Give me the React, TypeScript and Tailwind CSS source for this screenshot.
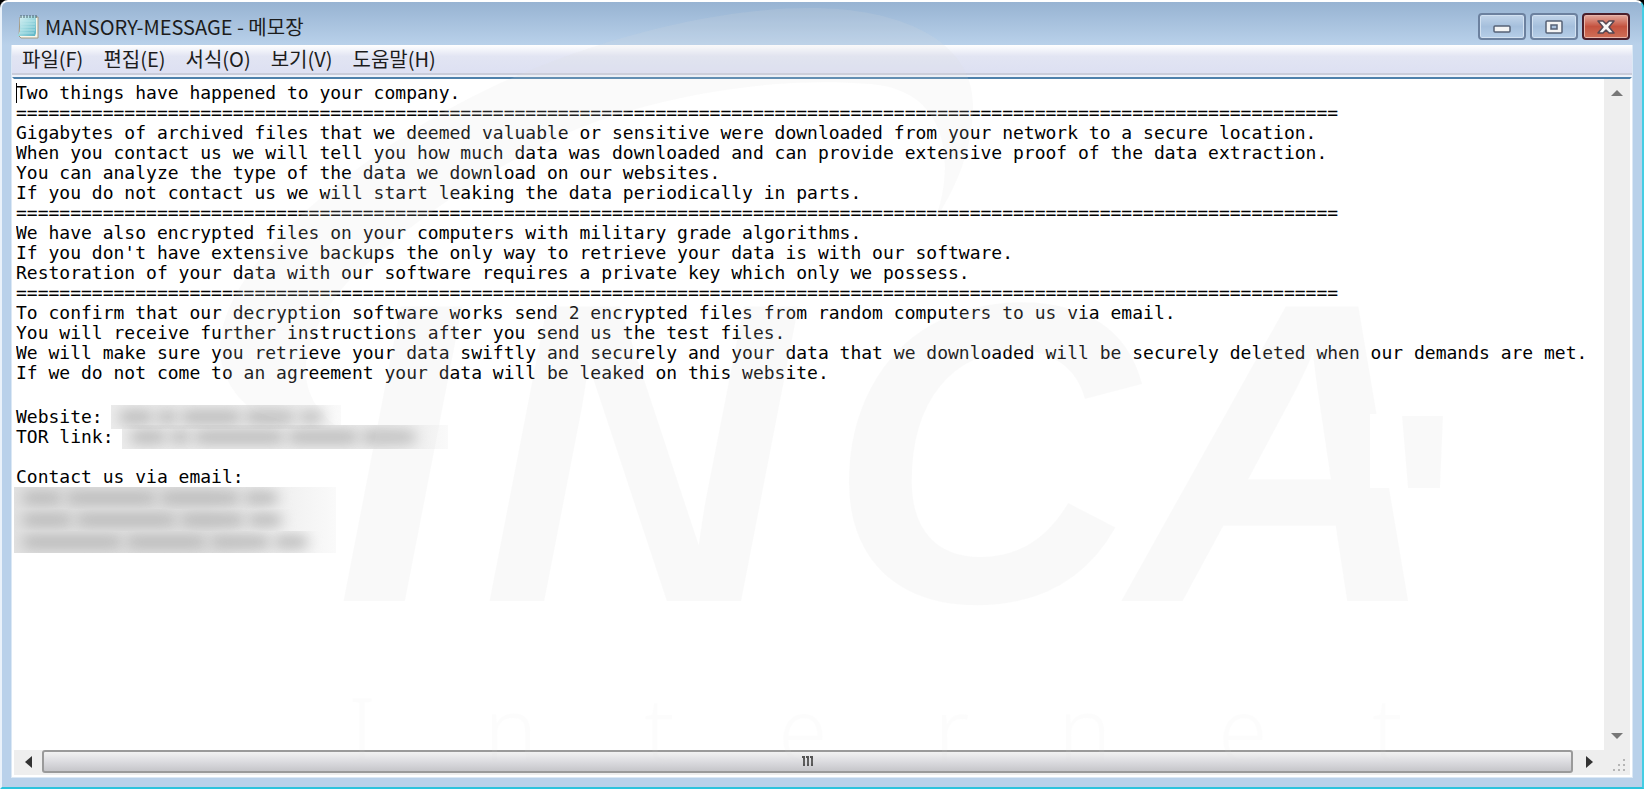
import type { ReactNode } from "react";

const RULE = "=".repeat(122);

const MESSAGE = [
  "Two things have happened to your company.",
  RULE,
  "Gigabytes of archived files that we deemed valuable or sensitive were downloaded from your network to a secure location.",
  "When you contact us we will tell you how much data was downloaded and can provide extensive proof of the data extraction.",
  "You can analyze the type of the data we download on our websites.",
  "If you do not contact us we will start leaking the data periodically in parts.",
  RULE,
  "We have also encrypted files on your computers with military grade algorithms.",
  "If you don't have extensive backups the only way to retrieve your data is with our software.",
  "Restoration of your data with our software requires a private key which only we possess.",
  RULE,
  "To confirm that our decryption software works send 2 encrypted files from random computers to us via email.",
  "You will receive further instructions after you send us the test files.",
  "We will make sure you retrieve your data swiftly and securely and your data that we downloaded will be securely deleted when our demands are met.",
  "If we do not come to an agreement your data will be leaked on this website.",
].join("\n");

const MENUS = ["파일(F)", "편집(E)", "서식(O)", "보기(V)", "도움말(H)"];

function NotepadIcon() {
  return (
    <svg width="24" height="26" viewBox="0 0 24 26" aria-hidden="true">
      <defs>
        <linearGradient id="page" x1="0" y1="0" x2="1" y2="1">
          <stop offset="0" stopColor="#e2f5f6" />
          <stop offset="0.5" stopColor="#9fd9e0" />
          <stop offset="1" stopColor="#58b2c4" />
        </linearGradient>
      </defs>
      <path d="M4 3 H22 V24 H5 L3 22 Z" fill="#fbf7ea" stroke="#a39a84" />
      <path d="M4 2 H20 V19 L19 22 H1 L4 18 Z" fill="url(#page)" />
      <path d="M5 7H19M5 10H19M5 13H19M4 16H19M3 19H18" stroke="#c2e9ee" strokeOpacity="0.7" />
      <path d="M5 1V4M8 1V4M11 1V4M14 1V4M17 1V4M20 1V4" stroke="#47606b" />
    </svg>
  );
}

function CaptionButton({
  label,
  danger,
  children,
}: {
  label: string;
  danger?: boolean;
  children: ReactNode;
}) {
  return (
    <button
      type="button"
      aria-label={label}
      className={
        danger
          ? "flex h-[27px] w-12 items-center justify-center rounded-[4px] border-2 border-[#4b1f2b] bg-linear-to-b from-[#e0a195] from-5% via-[#c4523f] via-50% to-[#cf6f58] shadow-[inset_0_0_0_1px_#e9b5aa]"
          : "flex h-[27px] w-12 items-center justify-center rounded-[4px] border-2 border-[#6c819f] bg-linear-to-b from-[#c2d5ea] via-[#a5bfdc] via-50% to-[#b6cee8] shadow-[inset_0_0_0_1px_#d3e2f2]"
      }
    >
      {children}
    </button>
  );
}

// Pixelated-out value, drawn as a row of soft grey marks
function Redacted({ marks, className }: { marks: number[]; className: string }) {
  return (
    <span className={`flex items-center gap-1 overflow-hidden px-2 ${className}`}>
      {marks.map((width, index) => (
        <span
          key={index}
          className="h-3 rounded-full bg-[#b4b4b4] blur-[7px]"
          style={{ width }}
        />
      ))}
    </span>
  );
}

function Watermark() {
  return (
    <svg
      className="pointer-events-none absolute inset-0 h-full w-full"
      viewBox="0 0 1644 789"
      fill="#dedede"
      fontFamily="Liberation Sans, sans-serif"
      aria-hidden="true"
    >
      <g opacity="0.15">
        <text x="336 482 828 1130" y="601" fontSize="428" fontWeight="bold" fontStyle="italic">
          INCA
        </text>
        <path d="M1402 416 L1443 416 L1440 488 L1408 488 Z" />
      </g>
      <path d="M1370 414 L1400 414 L1406 488 L1370 488 Z" fill="#fff" />
      <path
        opacity="0.15"
        d="M250 408 C170 340 260 230 410 132 C540 50 700 8 810 8 C900 8 973 40 973 105 C973 150 955 190 935 220 C955 165 950 90 870 84 C740 74 620 110 570 132 C480 172 400 230 345 285 C300 340 290 390 335 425 C300 425 270 420 250 408 Z"
      />
      <text
        x="348 484 644 778 934 1058 1218 1372"
        y="763"
        fontFamily="Noto Sans, sans-serif"
        fontSize="90"
        fontWeight="300"
        opacity="0.07"
      >
        Internet
      </text>
    </svg>
  );
}

function Editor() {
  return (
    <div className="relative min-w-0 flex-1 overflow-hidden bg-white pl-[2px] font-['DejaVu_Sans_Mono','Liberation_Mono',monospace] text-[18px] leading-[20px] text-black">
      <span className="absolute top-1 left-[2px] h-5 w-px bg-black" />
      <textarea
        aria-label="MANSORY-MESSAGE"
        className="block w-full resize-none overflow-hidden pt-1 whitespace-pre outline-none"
        rows={15}
        wrap="off"
        spellCheck={false}
        defaultValue={MESSAGE}
      />
      <div className="mt-6 flex h-5 items-center gap-2">
        <span>Website:</span>
        <Redacted
          className="h-6 w-[230px] bg-linear-to-r from-[#ececec] from-70% to-[#fafafa]"
          marks={[34, 20, 60, 50, 24]}
        />
      </div>
      <div className="flex h-5 items-center gap-2">
        <span>TOR link:</span>
        <Redacted
          className="h-6 w-[326px] bg-linear-to-r from-[#ececec] from-80% to-[#fafafa]"
          marks={[36, 20, 90, 70, 54]}
        />
      </div>
      <p className="mt-5">Contact us via email:</p>
      <div className="-ml-[2px] w-[322px] bg-linear-to-r from-[#e2e2e2] from-60% to-[#fafafa]">
        <Redacted className="h-[22px]" marks={[40, 90, 80, 34]} />
        <Redacted className="h-[22px]" marks={[50, 100, 64, 34]} />
        <Redacted className="h-[22px]" marks={[100, 80, 60, 34]} />
      </div>
    </div>
  );
}

function VerticalScrollbar() {
  return (
    <div className="flex w-[26px] flex-col justify-between bg-[#eeeeee]">
      <button type="button" aria-label="Scroll up" className="flex h-7 items-center justify-center">
        <svg width="12" height="6" viewBox="0 0 12 6">
          <path d="M0 6 L6 0 L12 6 Z" fill="#777" />
        </svg>
      </button>
      <button type="button" aria-label="Scroll down" className="flex h-7 items-center justify-center">
        <svg width="12" height="6" viewBox="0 0 12 6">
          <path d="M0 0 L6 6 L12 0 Z" fill="#777" />
        </svg>
      </button>
    </div>
  );
}

function HorizontalScrollbar() {
  return (
    <div className="flex h-[25px] bg-[#eeeeee] pb-[2px]">
      <button type="button" aria-label="Scroll left" className="flex w-7 items-center justify-center">
        <svg width="7" height="12" viewBox="0 0 7 12">
          <path d="M7 0 L0 6 L7 12 Z" fill="#333" />
        </svg>
      </button>
      <div className="flex flex-1 items-center justify-center rounded-[3px] border-2 border-[#9a9a9a] bg-linear-to-b from-[#f2f2f2] via-[#dcdce0] via-50% to-[#c6c6ca]">
        <svg width="13" height="11" viewBox="0 0 13 11">
          <path d="M1 0H4V10H2V2H1ZM5 0H8V10H6V2H5ZM9 0H12V10H10V2H9Z" fill="#555" />
        </svg>
      </div>
      <button type="button" aria-label="Scroll right" className="flex w-[33px] items-center justify-center">
        <svg width="7" height="12" viewBox="0 0 7 12">
          <path d="M0 0 L7 6 L0 12 Z" fill="#333" />
        </svg>
      </button>
      <svg className="w-6" height="24" viewBox="0 0 24 24" fill="#b5b5b5">
        <path d="M17 9h2v2h-2zM12 14h2v2h-2zM17 14h2v2h-2zM7 19h2v2h-2zM12 19h2v2h-2zM17 19h2v2h-2z" />
      </svg>
    </div>
  );
}

export default function App() {
  return (
    <div className="relative h-screen overflow-hidden bg-black font-['Noto_Sans_CJK_KR',sans-serif] text-[#1c1c1c]">
      <div className="flex h-full flex-col rounded-t-lg border-2 border-t-white border-r-[#45cde4] border-b-[#2cc3dc] border-l-[#eaf2fa] bg-[#b9d1ea]">
        <header className="flex h-[43px] items-center rounded-t-md bg-linear-to-b from-[#97b3d2] to-[#b9d1ea] pt-[6px] pr-3 pl-[14px]">
          <NotepadIcon />
          <h1 className="ml-[5px] flex-1 text-[20px] leading-6">MANSORY-MESSAGE - 메모장</h1>
          <div className="flex gap-1">
            <CaptionButton label="Minimize">
              <svg width="18" height="8" viewBox="0 0 18 8" className="mt-1">
                <rect x="1" y="1" width="16" height="6" rx="1" fill="#f4f4f4" stroke="#566176" strokeWidth="1.5" />
              </svg>
            </CaptionButton>
            <CaptionButton label="Maximize">
              <svg width="18" height="14" viewBox="0 0 18 14">
                <rect x="1" y="1" width="16" height="12" rx="1" fill="#f4f4f4" stroke="#566176" strokeWidth="1.5" />
                <rect x="6" y="5" width="6" height="4" fill="#a9c0dc" stroke="#566176" strokeWidth="1.5" />
              </svg>
            </CaptionButton>
            <CaptionButton label="Close" danger>
              <svg width="18" height="14" viewBox="0 0 18 14">
                <path d="M1 1H6L9 4L12 1H17L12 7L17 13H12L9 10L6 13H1L6 7Z" fill="#f6f6f6" stroke="#564752" strokeWidth="1.5" strokeLinejoin="round" />
              </svg>
            </CaptionButton>
          </div>
        </header>

        <div className="mx-[9px] mb-[9px] flex min-h-0 flex-1 flex-col border border-t-0 border-[#dbe8f5] bg-[#eef2fa]">
          <nav className="flex h-[30px] items-center border-b-2 border-[#c9ccda] bg-linear-to-b from-white via-[#e2e5f3] via-40% to-[#dde0f2]">
            {MENUS.map((menu) => (
              <button key={menu} type="button" className="px-[10px] text-[20px] leading-6">
                {menu}
              </button>
            ))}
          </nav>
          <main className="mt-[2px] flex min-h-0 flex-1 flex-col border-2 border-t-[#4d80ab] border-r-white border-b-white border-l-white">
            <div className="flex min-h-0 flex-1">
              <Editor />
              <VerticalScrollbar />
            </div>
            <HorizontalScrollbar />
          </main>
        </div>
      </div>
      <Watermark />
    </div>
  );
}
